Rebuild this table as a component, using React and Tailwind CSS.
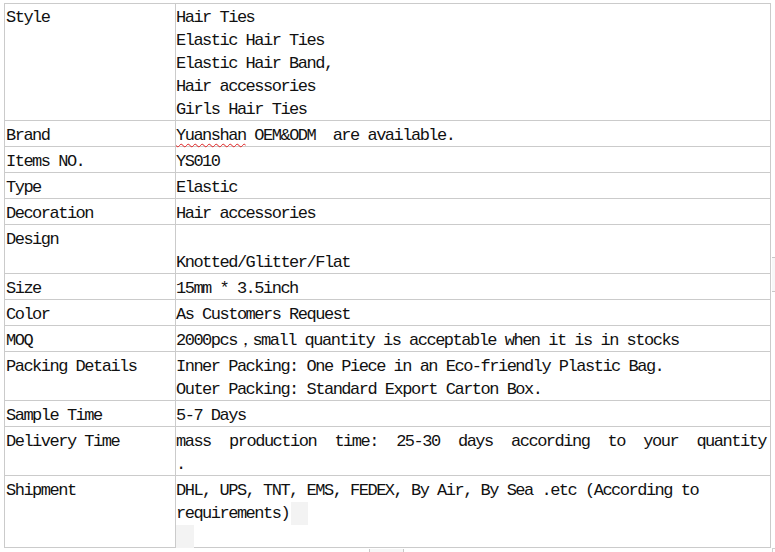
import React from "react";

const font = {
  fontFamily: '"Liberation Mono", "Courier New", monospace',
};

const rows = [
  { label: "Style", h: "h-[117px]", pt: "pt-[2px]", lines: ["Hair Ties", "Elastic Hair Ties", "Elastic Hair Band,", "Hair accessories", "Girls Hair Ties"] },
  { label: "Brand", h: "h-[26px]", brand: true },
  { label: "Items NO.", h: "h-[26px]", lines: ["YS010"] },
  { label: "Type", h: "h-[26px]", lines: ["Elastic"] },
  { label: "Decoration", h: "h-[26px]", lines: ["Hair accessories"] },
  { label: "Design", h: "h-[49px]", lines: ["\u00a0", "Knotted/Glitter/Flat"] },
  { label: "Size", h: "h-[26px]", lines: ["15mm * 3.5inch"] },
  { label: "Color", h: "h-[26px]", lines: ["As Customers Request"] },
  { label: "MOQ", h: "h-[26px]", lines: ["2000pcs\uFF0Csmall quantity is acceptable when it is in stocks"] },
  { label: "Packing Details", h: "h-[49px]", lines: ["Inner Packing: One Piece in an Eco-friendly Plastic Bag.", "Outer Packing: Standard Export Carton Box."] },
  { label: "Sample Time", h: "h-[26px]", lines: ["5-7 Days"] },
  { label: "Delivery Time", h: "h-[49px]", delivery: true },
  { label: "Shipment", h: "h-[72px]", shipment: true },
];

function Value({ r }) {
  if (r.brand) {
    return (
      <div className="leading-[23px] whitespace-pre">
        <span className="underline decoration-wavy decoration-[#e02020] decoration-1 underline-offset-[3px]">Yuanshan</span>
        {" OEM&ODM  are available."}
      </div>
    );
  }
  if (r.delivery) {
    return (
      <>
        <div className="leading-[23px] text-justify [text-align-last:justify] pr-[4px]">
          mass production time: 25-30 days according to your quantity
        </div>
        <div className="leading-[23px]">.</div>
      </>
    );
  }
  if (r.shipment) {
    return (
      <>
        <div className="leading-[23px] whitespace-pre">DHL, UPS, TNT, EMS, FEDEX, By Air, By Sea .etc (According to</div>
        <div className="leading-[23px] flex items-stretch whitespace-pre">
          <span>requirements)</span>
          <span className="ml-[2px] w-[17px] h-[23px] bg-[#f3f3f3]" />
        </div>
        <div className="leading-[23px] flex">
          <span className="w-[18px] h-[23px] bg-[#f3f3f3]" />
        </div>
      </>
    );
  }
  return r.lines.map((l, i) => (
    <div key={i} className="leading-[23px] whitespace-pre">
      {l}
    </div>
  ));
}

export default function App() {
  return (
    <div className="relative w-[775px] h-[552px] bg-white overflow-hidden text-[17px] tracking-[-1.5px] text-[#111]" style={font}>
      <div className="ml-[4px] mt-[3px] w-[767px] border-t border-l border-[#cbcbcb] grid grid-cols-[171px_595px]">
        {rows.map((r) => (
          <React.Fragment key={r.label}>
            <div className={`${r.h} ${r.pt || "pt-[3px]"} pl-[1px] border-r border-b border-[#cbcbcb]`}>
              <div className="leading-[23px] whitespace-pre">{r.label}</div>
            </div>
            <div className={`${r.h} ${r.pt || "pt-[3px]"} border-r border-b border-[#cbcbcb]`}>
              <Value r={r} />
            </div>
          </React.Fragment>
        ))}
      </div>
      {/* small page artifacts */}
      <div className="absolute left-[772px] top-[257px] w-[3px] h-[35px] bg-[#f7f7f7] border-t border-b border-[#c8c8c8]" />
      <div className="absolute left-[369px] top-[549px] w-[35px] h-[3px] bg-[#f7f7f7] border-l border-r border-[#c8c8c8]" />
      <div className="absolute left-[772px] top-[548px] w-[3px] h-[4px] border-l border-t border-[#d0d0d0]" />
    </div>
  );
}
